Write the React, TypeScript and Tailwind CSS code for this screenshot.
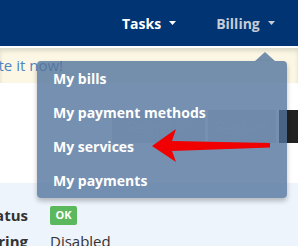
import React from "react";

// Caret used next to the nav items
const Caret = ({ color }: { color: string }) => (
  <svg width="7" height="4" viewBox="0 0 7 4" className="ml-[8px]">
    <polygon points="0,0 7,0 3.5,4" fill={color} />
  </svg>
);

const menuItems = ["My bills", "My payment methods", "My services", "My payments"];

const App = () => {
  return (
    <div
      className="relative w-[298px] h-[246px] overflow-hidden bg-white"
      style={{ fontFamily: '"Open Sans", "Liberation Sans", sans-serif' }}
    >
      {/* Top navbar */}
      <div className="h-[46px] bg-[#003473] flex items-center pl-[122px]">
        <div className="flex items-center text-white font-bold text-[14px]">
          Tasks
          <Caret color="#ffffff" />
        </div>
        <div className="flex items-center ml-[40px] text-[#c6ccd7] font-bold text-[14px]">
          Billing
          <Caret color="#c6ccd7" />
        </div>
      </div>
      <div className="h-[2px] bg-white" />

      {/* Notice bar */}
      <div className="h-[35px] bg-[#fbf7e4] shadow-[inset_0_3px_4px_rgba(0,0,0,0.12)] flex items-center">
        <div className="w-[63px] flex justify-end whitespace-nowrap text-[15px] text-[#4d84c4]">
          Please update it now!
        </div>
      </div>

      {/* Action buttons */}
      <div className="h-[100px] pt-[27px] pl-[112px] flex items-start gap-[3px]">
        <div className="w-[99px] h-[33px] bg-[#dedede] text-[#ececec] text-[16px] flex items-center justify-center">
          Reinstall
        </div>
        <div className="w-[73px] h-[33px] bg-[#dedede] text-[#ececec] text-[16px] flex items-center justify-center">
          Restart
        </div>
        <div className="w-[20px] h-[33px] bg-[#222222]" />
      </div>

      {/* Details */}
      <div className="h-[80px] bg-[#eef4fc] pt-[23px] text-[15px] text-[#333]">
        <div className="flex items-center h-[19px]">
          <div className="w-[28px] flex justify-end whitespace-nowrap font-bold">Status</div>
          <div className="ml-[22px] bg-[#5cb85c] text-white text-[11px] font-bold h-[19px] w-[27px] rounded-[2px] flex items-center justify-center">
            OK
          </div>
        </div>
        <div className="flex items-center mt-[5px] h-[22px]">
          <div className="w-[28px] flex justify-end whitespace-nowrap font-bold">Monitoring</div>
          <div className="ml-[22px]">Disabled</div>
        </div>
      </div>

      {/* Dropdown arrow */}
      <svg className="absolute left-[255px] top-[52px]" width="20" height="9" viewBox="0 0 20 9">
        <polygon points="0,9 10,0 20,9" fill="rgba(82,116,156,0.8)" />
      </svg>

      {/* Billing dropdown */}
      <div className="absolute left-[37px] top-[61px] w-[250px] h-[137px] rounded-[4px] bg-[rgba(82,116,156,0.8)] shadow-[0_3px_5px_rgba(0,0,0,0.25)]">
        {menuItems.map((item) => (
          <div key={item} className="h-[34px] pl-[16px] flex items-center text-white font-bold text-[14px]">
            {item}
          </div>
        ))}
      </div>

      {/* Red annotation arrow */}
      <svg className="absolute left-0 top-0" width="298" height="246" viewBox="0 0 298 246">
        <polygon
          points="152,146 176,129 172,141 270,143 270,147.5 172,151 176,162"
          fill="#f00000"
        />
      </svg>
    </div>
  );
};

export default App;
